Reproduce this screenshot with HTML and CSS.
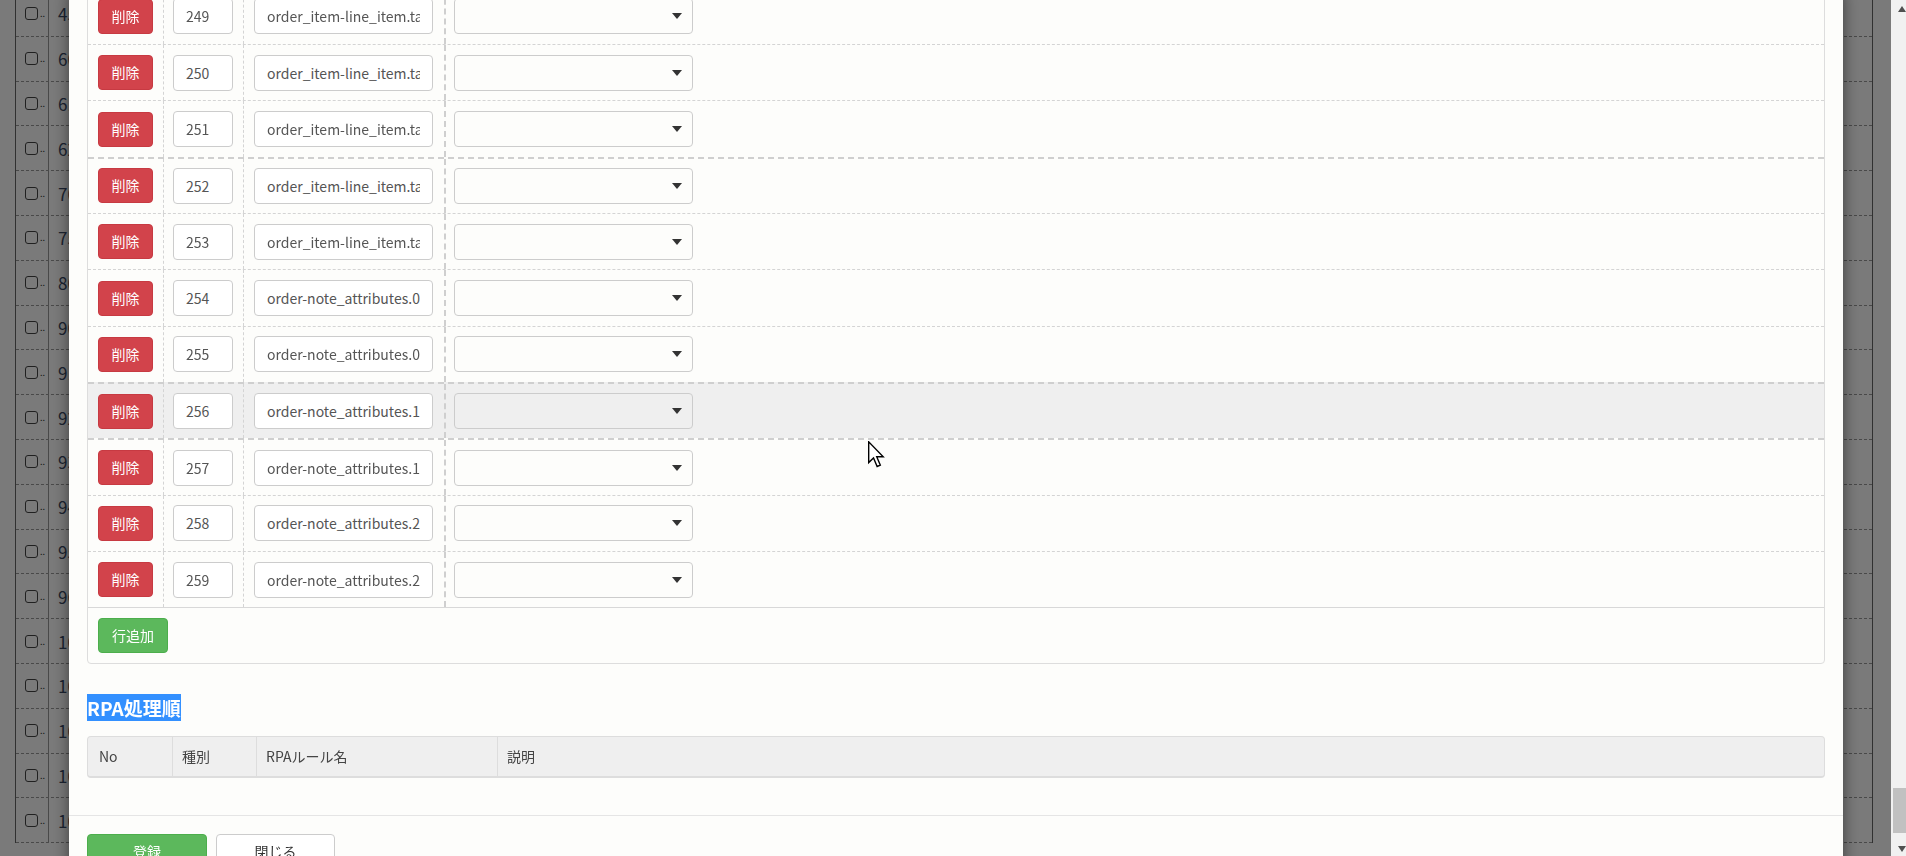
FILE: index.html
```html
<!DOCTYPE html>
<html lang="ja">
<head>
    <meta charset="UTF-8">
    <meta name="viewport" content="width=device-width, initial-scale=1.0">
    <title>項目マッピング</title>
    <link rel="stylesheet" href="styles.css">
</head>
<body>
    <!-- page behind the modal -->
    <div class="bg-list">
        <div class="bg-row"><div class="bg-check"><span class="box"></span><span class="dots">..</span></div><div class="bg-num">45</div></div>
        <div class="bg-row"><div class="bg-check"><span class="box"></span><span class="dots">..</span></div><div class="bg-num">60</div></div>
        <div class="bg-row"><div class="bg-check"><span class="box"></span><span class="dots">..</span></div><div class="bg-num">61</div></div>
        <div class="bg-row"><div class="bg-check"><span class="box"></span><span class="dots">..</span></div><div class="bg-num">62</div></div>
        <div class="bg-row"><div class="bg-check"><span class="box"></span><span class="dots">..</span></div><div class="bg-num">70</div></div>
        <div class="bg-row"><div class="bg-check"><span class="box"></span><span class="dots">..</span></div><div class="bg-num">75</div></div>
        <div class="bg-row"><div class="bg-check"><span class="box"></span><span class="dots">..</span></div><div class="bg-num">80</div></div>
        <div class="bg-row"><div class="bg-check"><span class="box"></span><span class="dots">..</span></div><div class="bg-num">90</div></div>
        <div class="bg-row"><div class="bg-check"><span class="box"></span><span class="dots">..</span></div><div class="bg-num">91</div></div>
        <div class="bg-row"><div class="bg-check"><span class="box"></span><span class="dots">..</span></div><div class="bg-num">92</div></div>
        <div class="bg-row"><div class="bg-check"><span class="box"></span><span class="dots">..</span></div><div class="bg-num">93</div></div>
        <div class="bg-row"><div class="bg-check"><span class="box"></span><span class="dots">..</span></div><div class="bg-num">94</div></div>
        <div class="bg-row"><div class="bg-check"><span class="box"></span><span class="dots">..</span></div><div class="bg-num">95</div></div>
        <div class="bg-row"><div class="bg-check"><span class="box"></span><span class="dots">..</span></div><div class="bg-num">96</div></div>
        <div class="bg-row"><div class="bg-check"><span class="box"></span><span class="dots">..</span></div><div class="bg-num">100</div></div>
        <div class="bg-row"><div class="bg-check"><span class="box"></span><span class="dots">..</span></div><div class="bg-num">101</div></div>
        <div class="bg-row"><div class="bg-check"><span class="box"></span><span class="dots">..</span></div><div class="bg-num">102</div></div>
        <div class="bg-row"><div class="bg-check"><span class="box"></span><span class="dots">..</span></div><div class="bg-num">103</div></div>
        <div class="bg-row"><div class="bg-check"><span class="box"></span><span class="dots">..</span></div><div class="bg-num">104</div></div>
    </div>

    <div class="backdrop"></div>

    <div class="modal">
        <div class="modal-body">
            <!-- mapping rows -->
            <div class="panel">
                <div class="map-row">
                    <div class="cell c-del"><button class="btn btn-danger">削除</button></div>
                    <div class="cell c-no"><input class="form-control no" type="text" value="249"></div>
                    <div class="cell c-key"><input class="form-control key" type="text" value="order_item-line_item.tax_lines.0.title"></div>
                    <div class="cell c-sel"><div class="select-wrap"><select class="form-select"><option></option></select></div></div>
                </div>
                <div class="map-row">
                    <div class="cell c-del"><button class="btn btn-danger">削除</button></div>
                    <div class="cell c-no"><input class="form-control no" type="text" value="250"></div>
                    <div class="cell c-key"><input class="form-control key" type="text" value="order_item-line_item.tax_lines.0.rate"></div>
                    <div class="cell c-sel"><div class="select-wrap"><select class="form-select"><option></option></select></div></div>
                </div>
                <div class="map-row">
                    <div class="cell c-del"><button class="btn btn-danger">削除</button></div>
                    <div class="cell c-no"><input class="form-control no" type="text" value="251"></div>
                    <div class="cell c-key"><input class="form-control key" type="text" value="order_item-line_item.tax_lines.0.price"></div>
                    <div class="cell c-sel"><div class="select-wrap"><select class="form-select"><option></option></select></div></div>
                </div>
                <div class="map-row drop-line">
                    <div class="cell c-del"><button class="btn btn-danger">削除</button></div>
                    <div class="cell c-no"><input class="form-control no" type="text" value="252"></div>
                    <div class="cell c-key"><input class="form-control key" type="text" value="order_item-line_item.tax_lines.1.title"></div>
                    <div class="cell c-sel"><div class="select-wrap"><select class="form-select"><option></option></select></div></div>
                </div>
                <div class="map-row">
                    <div class="cell c-del"><button class="btn btn-danger">削除</button></div>
                    <div class="cell c-no"><input class="form-control no" type="text" value="253"></div>
                    <div class="cell c-key"><input class="form-control key" type="text" value="order_item-line_item.tax_lines.1.rate"></div>
                    <div class="cell c-sel"><div class="select-wrap"><select class="form-select"><option></option></select></div></div>
                </div>
                <div class="map-row">
                    <div class="cell c-del"><button class="btn btn-danger">削除</button></div>
                    <div class="cell c-no"><input class="form-control no" type="text" value="254"></div>
                    <div class="cell c-key"><input class="form-control key" type="text" value="order-note_attributes.0.name"></div>
                    <div class="cell c-sel"><div class="select-wrap"><select class="form-select"><option></option></select></div></div>
                </div>
                <div class="map-row">
                    <div class="cell c-del"><button class="btn btn-danger">削除</button></div>
                    <div class="cell c-no"><input class="form-control no" type="text" value="255"></div>
                    <div class="cell c-key"><input class="form-control key" type="text" value="order-note_attributes.0.value"></div>
                    <div class="cell c-sel"><div class="select-wrap"><select class="form-select"><option></option></select></div></div>
                </div>
                <div class="map-row is-hover">
                    <div class="cell c-del"><button class="btn btn-danger">削除</button></div>
                    <div class="cell c-no"><input class="form-control no" type="text" value="256"></div>
                    <div class="cell c-key"><input class="form-control key" type="text" value="order-note_attributes.1.name"></div>
                    <div class="cell c-sel"><div class="select-wrap"><select class="form-select"><option></option></select></div></div>
                </div>
                <div class="map-row after-hover">
                    <div class="cell c-del"><button class="btn btn-danger">削除</button></div>
                    <div class="cell c-no"><input class="form-control no" type="text" value="257"></div>
                    <div class="cell c-key"><input class="form-control key" type="text" value="order-note_attributes.1.value"></div>
                    <div class="cell c-sel"><div class="select-wrap"><select class="form-select"><option></option></select></div></div>
                </div>
                <div class="map-row">
                    <div class="cell c-del"><button class="btn btn-danger">削除</button></div>
                    <div class="cell c-no"><input class="form-control no" type="text" value="258"></div>
                    <div class="cell c-key"><input class="form-control key" type="text" value="order-note_attributes.2.name"></div>
                    <div class="cell c-sel"><div class="select-wrap"><select class="form-select"><option></option></select></div></div>
                </div>
                <div class="map-row">
                    <div class="cell c-del"><button class="btn btn-danger">削除</button></div>
                    <div class="cell c-no"><input class="form-control no" type="text" value="259"></div>
                    <div class="cell c-key"><input class="form-control key" type="text" value="order-note_attributes.2.value"></div>
                    <div class="cell c-sel"><div class="select-wrap"><select class="form-select"><option></option></select></div></div>
                </div>
                <div class="panel-foot">
                    <button class="btn btn-success btn-add">行追加</button>
                </div>
            </div>

            <h4 class="section-title"><span class="selected">RPA処理順</span></h4>

            <div class="rpa-table">
                <div class="th">No</div>
                <div class="th">種別</div>
                <div class="th">RPAルール名</div>
                <div class="th">説明</div>
            </div>
        </div>

        <div class="modal-footer">
            <button class="btn btn-success btn-wide">登録</button>
            <button class="btn btn-default btn-close">閉じる</button>
        </div>
    </div>

    <!-- mouse pointer captured in the screenshot -->
    <div class="pointer">
        <svg width="18" height="28" viewBox="0 0 13 20">
            <path d="M0.5 0.5 L0.5 15.5 L4 12.2 L6.6 18.3 L8.9 17.3 L6.3 11.3 L11 11.3 Z" fill="#fff" stroke="#000" stroke-width="1" stroke-linejoin="miter"/>
        </svg>
    </div>

    <div class="scrollbar">
        <span class="arrow-up"></span>
        <span class="thumb"></span>
        <span class="arrow-down"></span>
    </div>
</body>
</html>
```

FILE: styles.css
```css
body {
    margin: 0;
    height: 856px;
    overflow: hidden;
    font-family: "Noto Sans CJK JP", "Noto Sans", sans-serif;
    font-size: 14px;
    color: #333;
    background: #fff;
}

/* page behind */
.bg-list {
    margin: -8px 33px 0 15px;
    border-left: 1px solid #666;
    border-right: 1px solid #666;
}
.bg-row {
    display: flex;
    height: 44.8px;
    box-sizing: border-box;
    border-bottom: 1px dashed #999;
}
.bg-check {
    width: 33px;
    box-sizing: border-box;
    padding-left: 9px;
    display: flex;
    align-items: center;
    border-right: 1px solid #999;
}
.bg-check .box {
    width: 11px;
    height: 11px;
    border: 1px solid #444;
    border-radius: 3px;
}
.bg-check .dots {
    font-size: 9px;
    margin-left: 2px;
    color: #333;
}
.bg-num {
    padding-left: 9px;
    display: flex;
    align-items: center;
    font-size: 17px;
    color: #3a4a66;
}

.backdrop {
    position: fixed;
    top: 0;
    left: 0;
    right: 0;
    bottom: 0;
    background: rgba(0, 0, 0, 0.52);
}

/* modal */
.modal {
    position: fixed;
    top: -13.35px;
    left: 69px;
    width: 1774px;
    background: #fdfdfb;
    box-shadow: 0 5px 15px rgba(0, 0, 0, 0.5);
}
.modal-body {
    padding: 0 18px 37px;
}
.panel {
    border: 1px solid #ddd;
    border-radius: 4px;
}
.map-row {
    display: grid;
    grid-template-columns: 75px 80px 201px 1fr;
    height: 56.35px;
    box-sizing: border-box;
    border-top: 1px dashed #d4d4d4;
}
.map-row.drop-line {
    border-top: 2px dashed #cfcfcf;
}
.map-row.is-hover {
    background: #efefef;
    border-top: 2px dashed #cfcfcf;
}
.map-row.after-hover {
    border-top: 2px dashed #cfcfcf;
}
.cell {
    display: flex;
    align-items: center;
    box-sizing: border-box;
    padding-left: 10px;
}
.c-no {
    border-left: 1px dashed #d4d4d4;
    padding-left: 9px;
}
.c-key {
    border-left: 1px dashed #d4d4d4;
}
.c-sel {
    border-left: 2px dashed #cfcfcf;
    padding-left: 8px;
}

.form-control {
    height: 36px;
    box-sizing: border-box;
    padding: 0 12px;
    border: 1px solid #ccc;
    border-radius: 4px;
    background: #fff;
    font: inherit;
    font-size: 14px;
    color: #555;
}
.form-control.no {
    width: 60px;
}
.form-control.key {
    width: 179px;
}
.select-wrap {
    position: relative;
    width: 239px;
}
.select-wrap::after {
    content: "";
    position: absolute;
    right: 11px;
    top: 15px;
    border-left: 5px solid transparent;
    border-right: 5px solid transparent;
    border-top: 6px solid #333;
    pointer-events: none;
}
.form-select {
    appearance: none;
    -webkit-appearance: none;
    display: block;
    width: 100%;
    height: 36px;
    border: 1px solid #ccc;
    border-radius: 4px;
    background: transparent;
    font: inherit;
}

.btn {
    font: inherit;
    font-size: 14px;
    line-height: 19px;
    padding: 7px 13px;
    border: 1px solid transparent;
    border-radius: 4px;
    cursor: pointer;
}
.btn-danger {
    width: 55px;
    padding: 7px 0;
    color: #fff;
    background: #d2434b;
    border-color: #c73a42;
}
.btn-success {
    color: #fff;
    background: #5cb85c;
    border-color: #4cae4c;
}
.btn-default {
    color: #333;
    background: #fff;
    border-color: #ccc;
}
.panel-foot {
    border-top: 1px solid #d8d8d8;
    padding: 10px;
}

.section-title {
    margin: 29.5px 0 14px;
    font-size: 19px;
    line-height: 28px;
    font-weight: bold;
}
.section-title .selected {
    background: #3390ff;
    color: #fff;
}

.rpa-table {
    display: grid;
    grid-template-columns: 84px 84px 241px 1fr;
    border: 1px solid #ddd;
    border-bottom-width: 2px;
    border-radius: 4px;
    background: #efefef;
}
.th {
    line-height: 39px;
    padding-left: 9px;
    color: #444;
}
.th:first-child {
    padding-left: 11px;
}
.th + .th {
    border-left: 1px solid #ddd;
}

.modal-footer {
    display: flex;
    gap: 9px;
    padding: 18px;
    border-top: 1px solid #e5e5e5;
}
.modal-footer .btn {
    padding: 6px 0;
    line-height: 20px;
}
.btn-wide {
    width: 120px;
}
.btn-close {
    width: 119px;
}

.pointer {
    position: fixed;
    left: 868px;
    top: 441px;
    line-height: 0;
}

.scrollbar {
    position: fixed;
    top: 0;
    right: 0;
    width: 15px;
    height: 856px;
    background: #f1f1f1;
}
.arrow-up {
    position: absolute;
    top: 6px;
    left: 7px;
    border-left: 4px solid transparent;
    border-right: 4px solid transparent;
    border-bottom: 6px solid #505050;
}
.arrow-down {
    position: absolute;
    top: 846px;
    left: 7px;
    border-left: 4px solid transparent;
    border-right: 4px solid transparent;
    border-top: 6px solid #505050;
}
.thumb {
    position: absolute;
    top: 788px;
    left: 2px;
    width: 13px;
    height: 45px;
    background: #c1c1c1;
}
```
